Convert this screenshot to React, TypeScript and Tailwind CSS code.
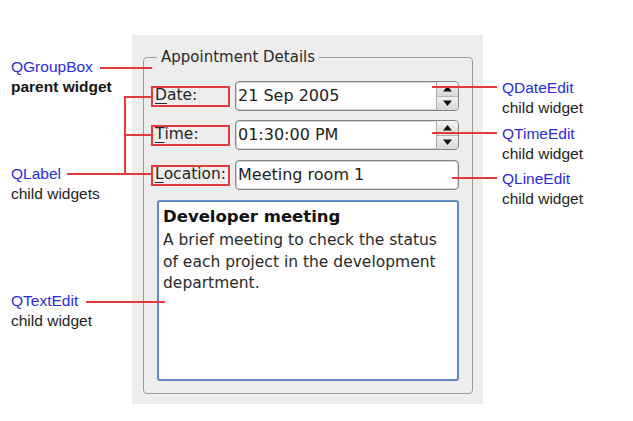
import React from "react";

const RED = "#e23b3b";

function SpinButtons() {
  return (
    <div className="flex w-[22px] flex-col border-l border-[#a9a9a9]">
      <div className="flex flex-1 items-center justify-center rounded-tr-[3px] border-b border-[#b5b5b5] bg-gradient-to-b from-[#f4f4f4] to-[#d9d9d9]">
        <svg width="11" height="7" viewBox="0 0 11 7">
          <path d="M1 6.5 L5.5 1 L10 6.5 Z" fill="#111" />
        </svg>
      </div>
      <div className="flex flex-1 items-center justify-center rounded-br-[3px] bg-gradient-to-b from-[#f0f0f0] to-[#d6d6d6]">
        <svg width="11" height="7" viewBox="0 0 11 7">
          <path d="M1 0.5 L5.5 6 L10 0.5 Z" fill="#111" />
        </svg>
      </div>
    </div>
  );
}

function Edit({ value, spin = false }: { value: string; spin?: boolean }) {
  return (
    <div className="flex h-[30px] overflow-hidden rounded-[4px] border border-[#858585] bg-white shadow-[inset_0_0_0_1px_#d4d4d4]">
      <div className="flex flex-1 items-center pl-[2px] text-[16px] text-[#222]">{value}</div>
      {spin && <SpinButtons />}
    </div>
  );
}

function FieldLabel({ first, rest }: { first: string; rest: string }) {
  return (
    <div
      className="flex h-[21px] items-center self-center border-2 pl-[2px] text-[15.5px] text-[#262626]"
      style={{ borderColor: RED }}
    >
      <span className="underline underline-offset-[3px]">{first}</span>
      {rest}
    </div>
  );
}

function Note({ title, sub, bold = false }: { title: string; sub: string; bold?: boolean }) {
  return (
    <div className="text-[15.5px] leading-[20px]">
      <div className="text-[#2b2be0]">{title}</div>
      <div className={bold ? "font-bold text-[#151515]" : "text-[#1e1e1e]"}>{sub}</div>
    </div>
  );
}

export default function App() {
  return (
    <div className="relative flex h-[421px] w-[633px] overflow-hidden bg-white font-['Liberation_Sans',Arial,sans-serif]">
      {/* left notes */}
      <div className="w-[132px] pl-[11px]">
        <div className="mt-[57px]">
          <Note title="QGroupBox" sub="parent widget" bold />
        </div>
        <div className="mt-[67px]">
          <Note title="QLabel" sub="child widgets" />
        </div>
        <div className="mt-[87px]">
          <Note title="QTextEdit" sub="child widget" />
        </div>
      </div>

      {/* widget panel */}
      <div className="mt-[35px] h-[369px] w-[351px] bg-[#ededed] pt-[12px] pl-[11px] pr-[10px] font-['DejaVu_Sans',sans-serif]">
        <fieldset className="h-[347px] rounded-[4px] border border-[#9b9b9b] pr-[13px] pl-[7px]">
          <legend className="ml-[6px] px-[4px] text-[15px] leading-[20px] text-[#2a2a2a]">
            Appointment Details
          </legend>
          <div className="grid grid-cols-[79px_1fr] gap-x-[5px] pt-[14px]">
            <FieldLabel first="D" rest="ate:" />
            <Edit value="21 Sep 2005" spin />
            <div className="col-span-2 h-[9px]" />
            <FieldLabel first="T" rest="ime:" />
            <Edit value="01:30:00 PM" spin />
            <div className="col-span-2 h-[10px]" />
            <FieldLabel first="L" rest="ocation:" />
            <Edit value="Meeting room 1" />
          </div>
          <div className="mt-[10px] ml-[6px] h-[181px] rounded-[3px] border-2 border-[#6289bd] bg-white px-[4px] pt-[4px] text-[#2a2a2a]">
            <div className="text-[16.5px] font-bold leading-[22px] text-[#111]">Developer meeting</div>
            <div className="mt-[2px] text-[15.5px] leading-[21.5px]">
              A brief meeting to check the status of each project in the development department.
            </div>
          </div>
        </fieldset>
      </div>

      {/* right notes */}
      <div className="pl-[19px]">
        <div className="mt-[78px]">
          <Note title="QDateEdit" sub="child widget" />
        </div>
        <div className="mt-[6px]">
          <Note title="QTimeEdit" sub="child widget" />
        </div>
        <div className="mt-[5px]">
          <Note title="QLineEdit" sub="child widget" />
        </div>
      </div>

      {/* callout lines */}
      <svg className="pointer-events-none absolute inset-0" width="633" height="421">
        <g stroke={RED} strokeWidth="2" fill="none">
          <line x1="100" y1="68" x2="152" y2="68" />
          <line x1="125" y1="96" x2="125" y2="175" />
          <line x1="125" y1="97" x2="152" y2="97" />
          <line x1="125" y1="135" x2="152" y2="135" />
          <line x1="67" y1="174" x2="152" y2="174" />
          <line x1="432" y1="87" x2="497" y2="87" />
          <line x1="432" y1="133" x2="497" y2="133" />
          <line x1="452" y1="178" x2="497" y2="178" />
          <line x1="86" y1="302" x2="165" y2="302" />
        </g>
      </svg>
    </div>
  );
}
